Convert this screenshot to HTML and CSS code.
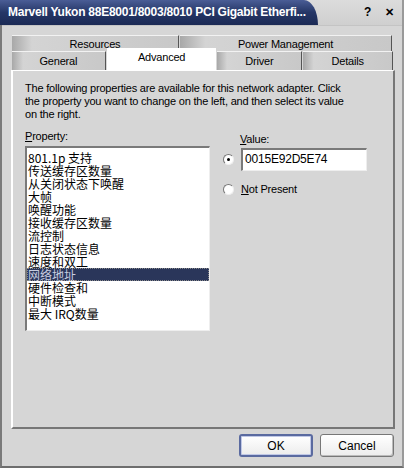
FILE: index.html
```html
<!DOCTYPE html>
<html lang="zh-CN">
<head>
    <meta charset="UTF-8">
    <title>Marvell Yukon Properties</title>
    <link rel="stylesheet" href="styles.css">
</head>
<body>
    <div class="window">
        <div class="titlebar">
            <div class="title-tab">Marvell Yukon 88E8001/8003/8010 PCI Gigabit Etherfi...</div>
            <div class="title-buttons">
                <span class="help">?</span>
                <span class="close">&#x2715;</span>
            </div>
        </div>

        <div class="tabs">
            <div class="tab-row">
                <div class="tab" style="width: 167px">Resources</div>
                <div class="tab" style="width: 212px">Power Management</div>
            </div>
            <div class="tab-row">
                <div class="tab" style="width: 94px">General</div>
                <div class="tab active" style="width: 110px">Advanced</div>
                <div class="tab" style="width: 85px">Driver</div>
                <div class="tab" style="width: 90px">Details</div>
            </div>
        </div>

        <div class="panel">
            <p class="intro">The following properties are available for this network adapter. Click<br>the property you want to change on the left, and then select its value<br>on the right.</p>

            <div class="columns">
                <div class="prop-col">
                    <div class="label"><u>P</u>roperty:</div>
                    <div class="listbox">
                        <div class="item">801.1p 支持</div>
                        <div class="item">传送缓存区数量</div>
                        <div class="item">从关闭状态下唤醒</div>
                        <div class="item">大帧</div>
                        <div class="item">唤醒功能</div>
                        <div class="item">接收缓存区数量</div>
                        <div class="item">流控制</div>
                        <div class="item">日志状态信息</div>
                        <div class="item">速度和双工</div>
                        <div class="item selected">网络地址</div>
                        <div class="item">硬件检查和</div>
                        <div class="item">中断模式</div>
                        <div class="item">最大 IRQ数量</div>
                    </div>
                </div>
                <div class="value-col">
                    <div class="label"><u>V</u>alue:</div>
                    <div class="value-row">
                        <span class="radio checked"></span>
                        <div class="textbox">0015E92D5E74</div>
                    </div>
                    <div class="value-row">
                        <span class="radio"></span>
                        <span class="radio-label"><u>N</u>ot Present</span>
                    </div>
                </div>
            </div>
        </div>

        <div class="buttons">
            <button class="default">OK</button>
            <button>Cancel</button>
        </div>
    </div>
</body>
</html>
```

FILE: styles.css
```css
body {
    margin: 0;
    font-family: 'Liberation Sans', Arial, sans-serif;
    font-size: 11px;
    letter-spacing: -0.2px;
    color: #000;
}

.window {
    width: 404px;
    height: 468px;
    box-sizing: border-box;
    background: #d6d6d6;
    border-left: 2px solid #7a7a7a;
    border-right: 2px solid #9a9a9a;
    border-bottom: 2px solid #6e6e6e;
}

.titlebar {
    display: flex;
    height: 25px;
    background: linear-gradient(#dcdcdc, #cfcfcf);
    border-bottom: 1px solid #c4c4c4;
}
.title-tab {
    width: 300px;
    padding-left: 8px;
    padding-right: 10px;
    margin-left: -2px;
    background: linear-gradient(#4a5d96, #253666 50%, #1b2a55);
    color: #fff;
    font-weight: bold;
    font-size: 12px;
    letter-spacing: -0.25px;
    line-height: 25px;
    border-top-right-radius: 14px 25px;
    white-space: nowrap;
    overflow: hidden;
}
.title-buttons {
    flex: 1;
    display: flex;
    justify-content: flex-end;
    gap: 14px;
    padding-right: 8px;
    font-weight: bold;
    font-size: 12px;
    line-height: 25px;
}
.title-buttons .close {
    font-size: 11px;
}

.tabs {
    margin: 9px 0 0 10px;
    width: 382px;
}
.tab-row {
    display: flex;
    height: 16px;
}
.tab-row + .tab-row {
    height: 19px;
}
.tab {
    box-sizing: border-box;
    text-align: center;
    line-height: 16px;
    font-size: 11px;
    background: linear-gradient(to right, #a8a8a8, #d4d4d4 12%, #c8c8c8);
    border-top: 1px solid #f2f2f2;
    border-right: 1px solid #555;
    margin-right: 1px;
}
.tab-row + .tab-row .tab {
    line-height: 18px;
}
.tab.active {
    background: #fff;
    margin-top: -3px;
    height: 23px;
    border: none;
    line-height: 16px;
    position: relative;
    z-index: 1;
}

.panel {
    margin-left: 9px;
    width: 384px;
    height: 359px;
    box-sizing: border-box;
    border-left: 2px solid #fff;
    border-top: 1px solid #fff;
    border-right: 2px solid #777;
    border-bottom: 2px solid #777;
    padding: 11px 0 0 12px;
}

.intro {
    margin: 0;
    line-height: 13px;
    white-space: nowrap;
}

.columns {
    display: flex;
    margin-top: 8px;
}
.label {
    line-height: 14px;
}
.prop-col {
    width: 198px;
}
.listbox {
    width: 185px;
    height: 185px;
    box-sizing: border-box;
    margin-top: 3px;
    background: #fff;
    border-top: 2px solid #7a7a7a;
    border-left: 2px solid #7a7a7a;
    border-right: 1px solid #eee;
    border-bottom: 1px solid #eee;
    padding-top: 3px;
    font-family: 'Noto Sans CJK SC', sans-serif;
    font-size: 12px;
    letter-spacing: 0;
}
.item {
    height: 13px;
    line-height: 13px;
    padding-left: 1px;
    white-space: nowrap;
}
.item.selected {
    background: #2a365a;
    color: #c8cde0;
    outline: 1px dotted #888;
    outline-offset: -1px;
}

.value-col {
    padding-top: 3px;
}
.value-col .label {
    padding-left: 17px;
}
.value-row {
    display: flex;
    align-items: center;
    margin-top: 2px;
}
.value-row + .value-row {
    margin-top: 12px;
}
.radio {
    width: 11px;
    height: 11px;
    border-radius: 50%;
    background: #fff;
    border: 1px solid;
    border-color: #777 #eee #eee #777;
    box-sizing: border-box;
    margin-right: 7px;
    position: relative;
}
.radio.checked::after {
    content: '';
    position: absolute;
    left: 3px;
    top: 3px;
    width: 3px;
    height: 3px;
    border-radius: 50%;
    background: #000;
}
.textbox {
    width: 126px;
    height: 23px;
    box-sizing: border-box;
    background: #fff;
    border-top: 2px solid #7a7a7a;
    border-left: 2px solid #7a7a7a;
    border-right: 1px solid #eee;
    border-bottom: 1px solid #eee;
    padding-left: 2px;
    line-height: 19px;
    font-size: 12px;
}

.buttons {
    display: flex;
    justify-content: flex-end;
    gap: 7px;
    padding: 5px 8px 0 0;
}
.buttons button {
    width: 74px;
    height: 23px;
    font-family: inherit;
    font-size: 12px;
    background: linear-gradient(#fff, #ececec);
    border: 1px solid #777;
    border-radius: 3px;
    box-shadow: inset -1px -1px 0 #bbb;
    padding: 0;
}
.buttons button.default {
    border: 2px solid #5a6aa0;
    box-shadow: inset 0 0 0 1px #c0c8e6;
}
```
